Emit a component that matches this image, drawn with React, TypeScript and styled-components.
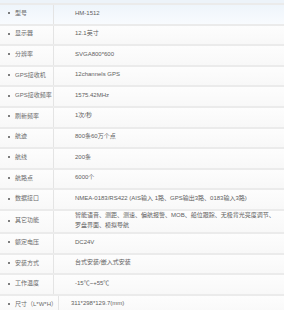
import React from 'react';
import styled, { createGlobalStyle } from 'styled-components';

const GlobalStyle = createGlobalStyle`
    html, body {
        margin: 0;
        padding: 0;
        background: #fafafa;
    }
    body {
        font-family: "Liberation Sans", "Noto Sans CJK SC", sans-serif;
        width: 284px;
        overflow: hidden;
    }
`

const SpecTable = styled.div`
    display: flex;
    flex-direction: column;
    width: 284px;
    background: #fafafa;
    &::before {
        content: '';
        display: block;
        height: 3px;
        background: #edf3f9;
    }
`

const Row = styled.div<{ $active?: boolean }>`
    display: flex;
    align-items: stretch;
    min-height: 18.6px;
    border-top: 2px solid #ebebeb;
    background: ${p => p.$active
        ? 'linear-gradient(#eff5fb, #f8fbfe)'
        : 'linear-gradient(#fdfdfd, #f8f8f8)'};
`

const Label = styled.div<{ $width: number }>`
    flex: 0 0 auto;
    width: ${p => p.$width}px;
    box-sizing: border-box;
    display: flex;
    align-items: center;
    padding-left: 15px;
    padding-bottom: 2px;
    position: relative;
    border-right: 1px solid #e4e4e4;
    font-size: 6px;
    line-height: 7px;
    color: #6a6a6a;
    white-space: nowrap;
    &::before {
        content: '';
        position: absolute;
        left: 8px;
        top: 50%;
        margin-top: -2px;
        width: 2px;
        height: 2px;
        border-radius: 50%;
        background: #555;
    }
`

const Value = styled.div<{ $indent: number }>`
    flex: 1;
    display: flex;
    align-items: center;
    padding-left: ${p => p.$indent}px;
    padding-bottom: 2px;
    font-size: 6px;
    line-height: 9.6px;
    color: #5e5e5e;
    white-space: nowrap;
`

interface Spec {
    label: string;
    value: React.ReactNode;
}

const specs: Spec[] = [
    { label: '型号', value: 'HM-1512' },
    { label: '显示器', value: '12.1英寸' },
    { label: '分辨率', value: 'SVGA800*600' },
    { label: 'GPS接收机', value: '12channels GPS' },
    { label: 'GPS接收频率', value: '1575.42MHz' },
    { label: '刷新频率', value: '1次/秒' },
    { label: '航迹', value: '800条60万个点' },
    { label: '航线', value: '200条' },
    { label: '航路点', value: '6000个' },
    { label: '数据接口', value: 'NMEA-0183/RS422 (AIS输入 1路、GPS输出3路、0183输入3路)' },
    { label: '其它功能', value: <>智能语音、测距、测速、偏航报警、MOB、船位跟踪、无极背光亮度调节、<br />罗盘界面、模拟导航</> },
    { label: '额定电压', value: 'DC24V' },
    { label: '安装方式', value: '台式安装/嵌入式安装' },
    { label: '工作温度', value: '-15℃~+55℃' },
    { label: '尺寸（L*W*H）', value: '311*298*129.7(mm)' },
];

const App: React.FC = () => {
    return (
        <>
            <GlobalStyle />
            <SpecTable>
                {specs.map((spec, i) => {
                    const last = i === specs.length - 1;
                    return (
                        <Row key={spec.label} $active={i === 0}>
                            <Label $width={last ? 59 : 54}>{spec.label}</Label>
                            <Value $indent={last ? 12 : 21}>
                                <span>{spec.value}</span>
                            </Value>
                        </Row>
                    );
                })}
            </SpecTable>
        </>
    )
}

export default App;
